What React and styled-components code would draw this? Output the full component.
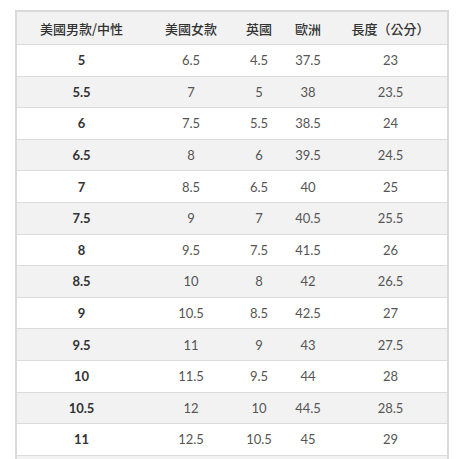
import React from "react";
import styled, { createGlobalStyle } from "styled-components";

const Global = createGlobalStyle`
  body {
    margin: 0;
    background: #fff;
    font-family: Lato, "Noto Sans CJK TC", sans-serif;
  }
`;

const Wrap = styled.div`
  padding: 10px 0 0 15px;
  height: 459px;
  overflow: hidden;
  box-sizing: border-box;
`;

const Table = styled.table`
  width: 432px;
  border-collapse: collapse;
  table-layout: fixed;
  border: 2px solid #d9d9d9;
  border-bottom: none;
`;

const Head = styled.th`
  height: 32px;
  padding: 0;
  background: #f2f2f2;
  color: #333;
  font-weight: 500;
  font-size: 13px;
  text-align: center;
  border-bottom: 1px solid #dcdcdc;
  font-family: "Noto Sans CJK TC", sans-serif;
`;

const Row = styled.tr`
  background: ${(p) => (p.$alt ? "#f2f2f2" : "#fff")};
  border-bottom: 1px solid #dcdcdc;
`;

const Cell = styled.td`
  height: 30.6px;
  padding: 0;
  text-align: center;
  font-size: 13px;
  color: ${(p) => (p.$bold ? "#333" : "#555")};
  font-weight: ${(p) => (p.$bold ? 700 : 400)};
`;

const cols = [
  { label: "美國男款/中性", w: 130 },
  { label: "美國女款", w: 90 },
  { label: "英國", w: 46 },
  { label: "歐洲", w: 52 },
  { label: "長度（公分）", w: 114 },
];

const rows = [
  ["5", "6.5", "4.5", "37.5", "23"],
  ["5.5", "7", "5", "38", "23.5"],
  ["6", "7.5", "5.5", "38.5", "24"],
  ["6.5", "8", "6", "39.5", "24.5"],
  ["7", "8.5", "6.5", "40", "25"],
  ["7.5", "9", "7", "40.5", "25.5"],
  ["8", "9.5", "7.5", "41.5", "26"],
  ["8.5", "10", "8", "42", "26.5"],
  ["9", "10.5", "8.5", "42.5", "27"],
  ["9.5", "11", "9", "43", "27.5"],
  ["10", "11.5", "9.5", "44", "28"],
  ["10.5", "12", "10", "44.5", "28.5"],
  ["11", "12.5", "10.5", "45", "29"],
  ["", "", "", "", ""],
];

export default function App() {
  return (
    <Wrap>
      <Global />
      <Table>
        <colgroup>
          {cols.map((c) => (
            <col key={c.label} style={{ width: c.w }} />
          ))}
        </colgroup>
        <thead>
          <tr>
            {cols.map((c) => (
              <Head key={c.label}>{c.label}</Head>
            ))}
          </tr>
        </thead>
        <tbody>
          {rows.map((r, i) => (
            <Row key={i} $alt={i % 2 === 1}>
              {r.map((v, j) => (
                <Cell key={j} $bold={j === 0}>
                  {v}
                </Cell>
              ))}
            </Row>
          ))}
        </tbody>
      </Table>
    </Wrap>
  );
}
